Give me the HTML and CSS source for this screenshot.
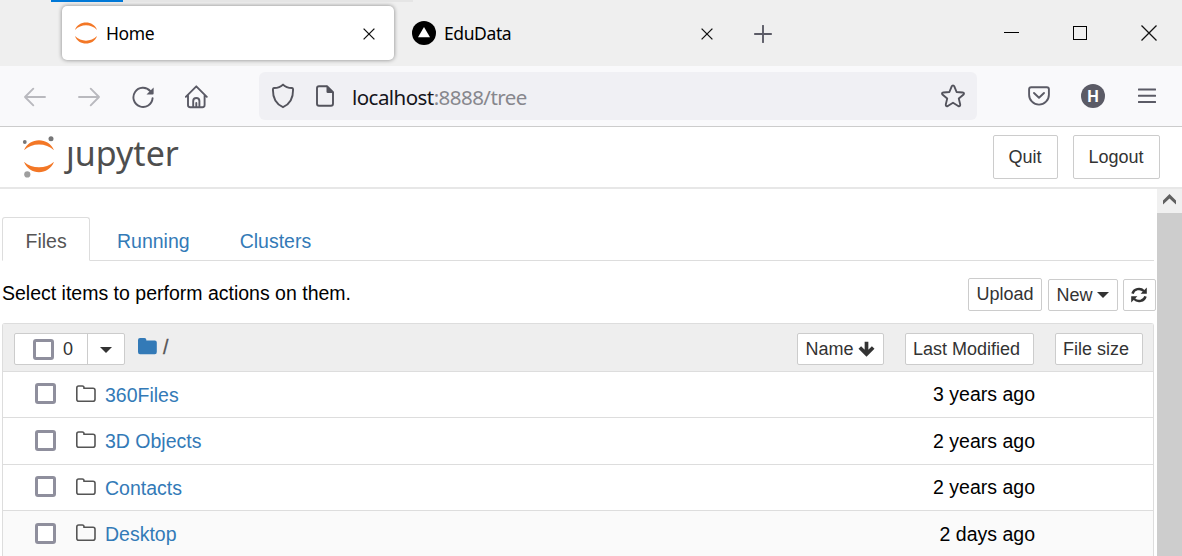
FILE: index.html
```html
<!DOCTYPE html>
<html lang="en">
<head>
<meta charset="utf-8">
<title>Home</title>
<link rel="stylesheet" href="styles.css">
</head>
<body>
<div class="window">
  <header class="tabstrip">
    <div class="progress"><span class="progress-fill"></span></div>
    <div class="tab tab-active">
      <svg class="tab-icon" width="24" height="24" viewBox="0 0 24 24"><path fill="#f37726" d="M1 9C4 -1 20 -1 23 9C17 2.8 7 2.8 1 9ZM1 15C4 25 20 25 23 15C17 21.2 7 21.2 1 15Z"/></svg>
      <span class="tab-title">Home</span>
      <svg class="tab-close" width="12" height="12" viewBox="0 0 12 12"><path class="ink" d="M.6 .6L11.4 11.4M11.4 .6L.6 11.4"/></svg>
    </div>
    <div class="tab tab-second">
      <svg class="tab-icon" width="24" height="24" viewBox="0 0 24 24"><circle cx="12" cy="12" r="12"/><path fill="#fff" d="M12 6L18 16.3H6Z"/></svg>
      <span class="tab-title">EduData</span>
      <svg class="tab-close" width="12" height="12" viewBox="0 0 12 12"><path class="ink" d="M.6 .6L11.4 11.4M11.4 .6L.6 11.4"/></svg>
    </div>
    <svg class="new-tab" width="18" height="18" viewBox="0 0 18 18"><path class="line" d="M9 .8V17.2M.8 9H17.2"/></svg>
    <div class="window-controls">
      <svg width="16" height="16" viewBox="0 0 16 16"><path class="crisp" d="M1 7.5H16"/></svg>
      <svg width="16" height="16" viewBox="0 0 16 16"><path class="crisp" d="M1.5 1.5H14.5V14.5H1.5Z"/></svg>
      <svg width="16" height="16" viewBox="0 0 16 16"><path class="ink thin" d="M.5 .5L15.5 15.5M15.5 .5L.5 15.5"/></svg>
    </div>
  </header>

  <nav class="toolbar">
    <div class="nav-buttons">
      <svg width="24" height="24" viewBox="0 0 24 24"><path class="line faded" d="M22 12H2M10.3 3.7L2 12L10.3 20.3"/></svg>
      <svg width="24" height="24" viewBox="0 0 24 24"><path class="line faded" d="M2 12H22M13.7 3.7L22 12L13.7 20.3"/></svg>
      <svg width="24" height="24" viewBox="0 0 24 24"><path class="line" d="M19.2 6A9.6 9.6 0 1 0 21.6 13.2"/><path class="solid" d="M22.6 2.5V8.5Q22.6 9.4 21.7 9.4H15.5Z"/></svg>
      <svg width="24" height="24" viewBox="0 0 24 24"><path class="line" d="M.8 11.8L11.3 1.3L21.8 11.8M3 10V20Q3 22.2 5.2 22.2H17.4Q19.6 22.2 19.6 20V10M8.2 21.7V16Q8.2 13 11.3 13Q14.4 13 14.4 16V21.7M11.3 18V21.7"/></svg>
    </div>
    <div class="urlbar">
      <svg width="24" height="26" viewBox="0 0 24 26"><path class="line dark" d="M12 1.6C10 3.8 5.5 5 3 5Q1.9 5.2 1.9 6.6C1.8 14 4 20.8 12 24.2C20 20.8 22.2 14 22.1 6.6Q22.1 5.2 21 5C18.5 5 14 3.8 12 1.6Z"/></svg>
      <svg class="page-icon" width="20" height="24" viewBox="0 0 20 24"><path class="line dark" d="M4 2.2H12L18 8.2V19.8Q18 21.8 16 21.8H4Q2 21.8 2 19.8V4.2Q2 2.2 4 2.2Z"/><path class="solid dark-fill" d="M11.5 1.5L19 9H12.8Q11.5 9 11.5 7.7Z"/></svg>
      <span class="url"><span class="host">localhost</span>:8888/tree</span>
      <svg class="star" width="26" height="26" viewBox="0 0 26 26"><path class="line dark" d="M13 2.4Q13.9 2.4 14.3 3.4L16.6 9L22.6 9.5Q25 9.9 23.3 11.8L18.8 15.6L20.2 21.4Q20.4 23.9 18.2 23L13 19.8L7.8 23Q5.6 23.9 5.8 21.4L7.2 15.6L2.7 11.8Q1 9.9 3.4 9.5L9.4 9L11.7 3.4Q12.1 2.4 13 2.4Z"/></svg>
    </div>
    <div class="actions">
      <svg width="22" height="20" viewBox="0 0 22 20"><path class="line" d="M3.2 1.2H18.8Q20.9 1.2 20.9 3.3V8.7A9.9 9.9 0 0 1 1.1 8.7V3.3Q1.1 1.2 3.2 1.2Z"/><path class="line" d="M6 7L11 11.8L16 7"/></svg>
      <span class="avatar">H</span>
      <svg width="18" height="16" viewBox="0 0 18 16"><path class="line" d="M.7 1.5H17.3M.7 7.7H17.3M.7 14H17.3"/></svg>
    </div>
  </nav>

  <section class="brandbar">
    <div class="brand">
      <svg width="34" height="44" viewBox="0 0 34 44"><path fill="#f37726" d="M2 16.2C7 2.8 27 2.8 32 16.2C24 8.6 10 8.6 2 16.2ZM2 27.8C7 41.6 27 41.6 32 27.8C24 35.2 10 35.2 2 27.8Z"/><circle cx="2.8" cy="8" r="1.9" fill="#767677"/><circle cx="29" cy="4.8" r="2.5" fill="#767677"/><circle cx="5.3" cy="40.4" r="3.1" fill="#9e9e9e"/></svg>
      <span class="wordmark">ȷupyter</span>
    </div>
    <button class="btn btn-lg">Quit</button>
    <button class="btn btn-lg btn-logout">Logout</button>
  </section>

  <div class="viewport">
    <main class="content">
      <ul class="page-tabs">
        <li class="page-tab current">Files</li>
        <li class="page-tab">Running</li>
        <li class="page-tab">Clusters</li>
      </ul>
      <div class="tree-tools">
        <span class="hint">Select items to perform actions on them.</span>
        <button class="btn btn-upload">Upload</button>
        <button class="btn btn-new">New<i class="caret"></i></button>
        <button class="btn btn-refresh" aria-label="Refresh"><svg width="16" height="16" viewBox="0 0 16 16"><path fill="none" stroke="#333" stroke-width="2.5" d="M1.5 6.6A6.6 6.2 0 0 1 12.8 4M14.5 9.4A6.6 6.2 0 0 1 3.2 12"/><path fill="#333" d="M15.8 .6V6.8H9.6ZM.2 15.4V9.2H6.4Z"/></svg></button>
      </div>
      <div class="list">
        <div class="list-header">
          <div class="selector">
            <span class="select-all"><i class="checkbox"></i>0</span>
            <span class="select-menu"><i class="caret"></i></span>
          </div>
          <svg class="root-folder" width="19" height="17" viewBox="0 0 19 17"><path fill="#337ab7" d="M2 0H6.5Q8.3 0 8.3 1.8V2.4H16.8Q18.8 2.4 18.8 4.4V14Q18.8 16.2 16.8 16.2H2Q0 16.2 0 14V2Q0 0 2 0Z"/></svg>
          <span class="slash">/</span>
          <button class="btn sort-name">Name<svg width="17" height="17" viewBox="0 0 17 17"><path fill="none" stroke="#333" stroke-width="3.7" d="M8.5 .8V12.5M1.8 6.5L8.5 13.1L15.2 6.5"/></svg></button>
          <button class="btn sort-modified">Last Modified</button>
          <button class="btn sort-size">File size</button>
        </div>
        <div class="row"><i class="checkbox"></i><svg class="folder" width="20" height="18" viewBox="0 0 20 18"><path d="M2.7 1H6.3Q8 1 8 2.7V3.3H17Q19 3.3 19 5.2V14.3Q19 16.3 17 16.3H2.7Q.8 16.3 .8 14.3V3Q.8 1 2.7 1Z"/></svg><a class="name">360Files</a><span class="modified">3 years ago</span></div>
        <div class="row tall"><i class="checkbox"></i><svg class="folder" width="20" height="18" viewBox="0 0 20 18"><path d="M2.7 1H6.3Q8 1 8 2.7V3.3H17Q19 3.3 19 5.2V14.3Q19 16.3 17 16.3H2.7Q.8 16.3 .8 14.3V3Q.8 1 2.7 1Z"/></svg><a class="name">3D Objects</a><span class="modified">2 years ago</span></div>
        <div class="row"><i class="checkbox"></i><svg class="folder" width="20" height="18" viewBox="0 0 20 18"><path d="M2.7 1H6.3Q8 1 8 2.7V3.3H17Q19 3.3 19 5.2V14.3Q19 16.3 17 16.3H2.7Q.8 16.3 .8 14.3V3Q.8 1 2.7 1Z"/></svg><a class="name">Contacts</a><span class="modified">2 years ago</span></div>
        <div class="row tall hovered"><i class="checkbox"></i><svg class="folder" width="20" height="18" viewBox="0 0 20 18"><path d="M2.7 1H6.3Q8 1 8 2.7V3.3H17Q19 3.3 19 5.2V14.3Q19 16.3 17 16.3H2.7Q.8 16.3 .8 14.3V3Q.8 1 2.7 1Z"/></svg><a class="name">Desktop</a><span class="modified">2 days ago</span></div>
      </div>
    </main>
    <aside class="scrollbar">
      <div class="scroll-up"><svg width="13" height="11" viewBox="0 0 13 11"><path fill="#606060" d="M6.5 0L13 6.5V10.5L6.5 4.6L0 10.5V6.5Z"/></svg></div>
      <div class="thumb"></div>
    </aside>
  </div>
</div>
</body>
</html>
```
FILE: styles.css
```css
* { box-sizing: border-box; }
body { margin: 0; overflow: hidden; font: 19.5px/28px "Liberation Sans", Arial, sans-serif; color: #000; background: #fff; }
svg { display: block; flex: none; }
.window { width: 1182px; height: 556px; display: flex; flex-direction: column; overflow: hidden; }

.line { fill: none; stroke: #5b5b66; stroke-width: 1.9; stroke-linecap: round; stroke-linejoin: round; }
.faded { stroke: #b9b9be; }
.dark { stroke: #53535c; }
.solid { fill: #5b5b66; }
.dark-fill { fill: #53535c; }
.ink { fill: none; stroke: #111; stroke-width: 1.3; }
.thin { stroke-width: 1.3; }
.crisp { fill: none; stroke: #000; shape-rendering: crispEdges; }

/* Tab strip */
.tabstrip { position: relative; height: 66px; flex: none; display: flex; background: #efefef; padding: 6px 24px 6px 62px; font-family: "Noto Sans", sans-serif; font-size: 17.5px; }
.progress { position: absolute; left: 51px; top: 0; width: 362px; height: 2px; background: #e5e5e5; }
.progress-fill { display: block; width: 72px; height: 2px; background: #0078d7; }
.tab { height: 54px; width: 332px; display: flex; align-items: center; padding: 0 19px 0 12px; border-radius: 5px; }
.tab-active { background: #fff; box-shadow: 0 0 4px rgba(0,0,0,.45); }
.tab-second { margin-left: 6px; }
.tab-title { flex: 1; margin-left: 8px; letter-spacing: -.4px; }
.tab-close { margin-top: 1px; }
.new-tab { margin: 19px 0 0 22px; }
.window-controls { margin-left: auto; display: flex; gap: 53px; padding: 19px 1px 0 0; }

/* Navigation toolbar */
.toolbar { height: 61px; flex: none; display: flex; background: #f9f9fb; border-bottom: 1px solid #ccc; padding: 6px 24px 6px 23px; }
.nav-buttons { display: flex; gap: 30px; width: 236px; padding-top: 13px; }
.urlbar { width: 718px; height: 48px; background: #f0f0f4; border-radius: 6px; display: flex; align-items: center; padding: 0 11px 0 12px; }
.page-icon { margin-left: 20px; }
.url { flex: 1; margin: 1px 0 0 17px; font: 20.5px/28px "Noto Sans", sans-serif; letter-spacing: -.55px; color: #87878d; }
.host { color: #15141a; }
.actions { flex: 1; display: flex; align-items: center; justify-content: space-between; margin: 0 2px 0 51px; }
.avatar { width: 24px; height: 24px; border-radius: 50%; background: #5b5b66; color: #fff; font: bold 16px/25px "Liberation Sans", sans-serif; text-align: center; margin-right: 2px; }

/* Notebook header */
.brandbar { height: 62px; flex: none; display: flex; align-items: flex-start; padding: 8px 22px 0; border-bottom: 2px solid #e7e7e7; }
.brand { display: flex; flex: 1; margin-top: -1px; }
.wordmark { margin: 0 0 0 10px; font: 34px/38px "Noto Sans", sans-serif; color: #4e4e4e; }
.btn { display: flex; align-items: center; justify-content: center; height: 32px; margin: 0; padding: 0; border: 1px solid #ccc; border-radius: 2px; background: #fff; color: #333; font: 18px/24px "Liberation Sans", Arial, sans-serif; white-space: nowrap; }
.btn-lg { width: 65px; height: 44px; padding-right: 1px; }
.btn-logout { width: 87px; margin-left: 15px; }

/* Page body */
.viewport { flex: 1; display: flex; }
.content { width: 1157px; padding: 28px 3px 0 2px; }
.page-tabs { display: flex; height: 44px; width: 1152px; margin: 0; padding: 0; list-style: none; border-bottom: 1px solid #ddd; }
.page-tab { height: 44px; margin-right: 2px; padding: 9px 23px 0; color: #337ab7; border: 1px solid transparent; }
.current { width: 88px; color: #555; background: #fff; border-color: #ddd #ddd #fff; border-radius: 3px 3px 0 0; margin-right: 3px; padding: 9px 0 0 22.5px; }
.tree-tools { display: flex; align-items: flex-end; height: 50px; width: 1154px; }
.hint { flex: 1; margin-bottom: 4px; }
.btn-upload { width: 74px; height: 33px; padding-bottom: 2px; }
.btn-new { width: 70px; margin-left: 6px; padding-right: 1px; }
.btn-refresh { width: 33px; margin-left: 5px; padding: 0 1px 1px 0; }
.caret { border: 6px solid transparent; border-top-color: #333; border-bottom: 0; margin-left: 4px; }

.list { width: 1152px; margin-top: 12px; border: 1px solid #ddd; border-bottom: 0; border-radius: 3px 3px 0 0; }
.list-header { height: 48px; display: flex; align-items: flex-start; padding: 9px 10px 0 11px; background: #eee; border-bottom: 1px solid #ddd; }
.selector { display: flex; width: 111px; height: 32px; border: 1px solid #ccc; border-radius: 2px; background: #fff; font-size: 18px; color: #333; }
.select-all { width: 73px; display: flex; align-items: center; gap: 9px; padding-left: 18px; border-right: 1px solid #ccc; }
.select-menu { flex: 1; display: flex; align-items: center; justify-content: center; padding-top: 2px; }
.select-menu .caret { margin: 0; }
.checkbox { flex: none; width: 21px; height: 21px; border: 3px solid #8f8f9d; border-radius: 3px; background: #fff; }
.root-folder { margin: 5px 0 0 13px; }
.slash { flex: 1; margin-left: 6px; color: #555; -webkit-text-stroke: .3px #555; }
.sort-name { width: 87px; gap: 4px; padding-right: 1px; }
.sort-modified { width: 129px; margin-left: 21px; padding-right: 6px; }
.sort-size { width: 88px; margin-left: 21px; padding-right: 6px; }
.row { height: 46px; display: flex; align-items: center; padding: 0 118px 0 32px; border-bottom: 1px solid #ddd; }
.tall { height: 47px; }
.hovered { background: #fafafa; }
.row .checkbox { margin-top: -2px; }
.folder { margin-left: 20px; margin-top: -1px; fill: none; stroke: #555; stroke-width: 1.6; }
.tall .folder { margin-top: -2px; }
.name { flex: 1; margin-left: 9px; color: #337ab7; }
.row .modified { margin-top: -1px; }
.tall .checkbox, .tall .name { margin-top: -1px; }

/* Scrollbar */
.scrollbar { width: 25px; display: flex; flex-direction: column; background: #f0f0f0; }
.scroll-up { height: 24px; display: flex; align-items: center; justify-content: center; }
.scroll-up svg { margin-top: -3px; }
.thumb { flex: 1; background: #cdcdcd; }
```
